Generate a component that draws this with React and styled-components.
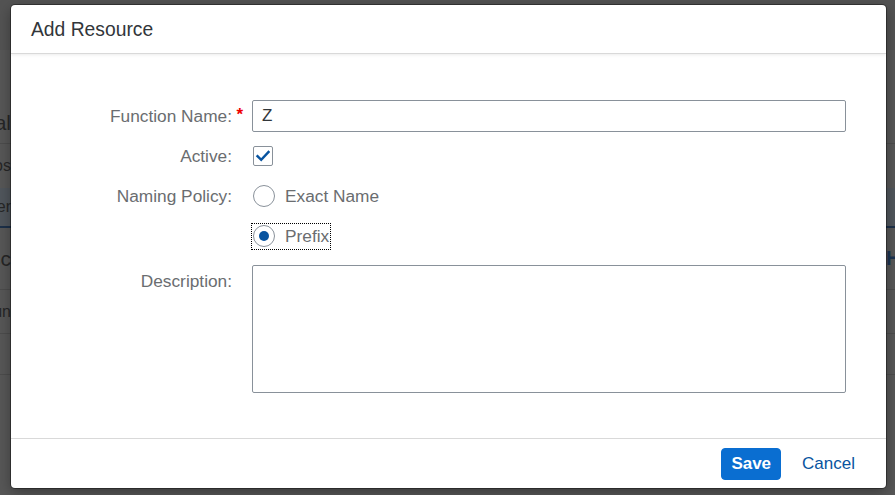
import styled, { createGlobalStyle } from 'styled-components';

const GlobalStyle = createGlobalStyle`
  html, body {
    margin: 0;
    padding: 0;
    width: 895px;
    height: 495px;
    overflow: hidden;
    font-family: "Liberation Sans", Arial, sans-serif;
  }
`;

// page behind the dialog, already dimmed
const Page = styled.div`
  position: relative;
  width: 895px;
  height: 495px;
  background: #575757;
  overflow: hidden;
`;

const Backdrop = styled.div`
  display: flex;
  flex-direction: column;
`;

const BgRow = styled.div`
  display: flex;
  justify-content: space-between;
  align-items: ${p => p.bottom ? 'flex-end' : 'center'};
  padding-bottom: ${p => p.bottom ? 8 : 0}px;
  height: ${p => p.h}px;
  background: ${p => p.bg || '#575757'};
  border-bottom: ${p => p.line ? `${p.lineW || 1}px solid ${p.line}` : 'none'};
  box-sizing: border-box;
`;

const BgLeft = styled.div`
  width: 11px;
  display: flex;
  justify-content: flex-end;
  overflow: hidden;
  white-space: nowrap;
  color: #262626;
  font-size: ${p => p.size || 16}px;
`;

const BgRight = styled.div`
  width: 9px;
  overflow: hidden;
  white-space: nowrap;
  color: #1b3452;
  font-size: 20px;
  font-weight: 700;
`;

const Dialog = styled.div`
  position: absolute;
  left: 11px;
  top: 5px;
  width: 875px;
  height: 483px;
  background: #fff;
  border-radius: 4px;
  box-shadow: 0 0 0 1px rgba(0, 0, 0, 0.35), 0 4px 14px rgba(0, 0, 0, 0.35);
  display: flex;
  flex-direction: column;
  overflow: hidden;
`;

const Header = styled.div`
  height: 49px;
  flex-shrink: 0;
  display: flex;
  align-items: center;
  padding-left: 20px;
  padding-top: 2px;
  box-sizing: border-box;
  border-bottom: 1px solid #d9d9d9;
  box-shadow: 0 1px 3px rgba(0, 0, 0, 0.08);
  position: relative;
  z-index: 1;
`;

const Title = styled.h1`
  margin: 0;
  font-size: 19.3px;
  font-weight: 400;
  color: #32363a;
`;

const Content = styled.div`
  flex: 1;
  padding-top: 46px;
`;

const Form = styled.div`
  display: grid;
  grid-template-columns: 221px 594px;
  column-gap: 20px;
  row-gap: 8px;
`;

const Label = styled.div`
  height: 32px;
  display: flex;
  align-items: center;
  justify-content: flex-end;
  font-size: 17.3px;
  color: #6a6d70;
  margin-top: ${p => p.mt || 0}px;
  position: relative;
  ${p => p.required && `
    &::after {
      content: "*";
      position: absolute;
      right: -11px;
      top: 5px;
      color: #e00;
      font-size: 17px;
      font-weight: 700;
    }
  `}
`;

const Cell = styled.div`
  height: ${p => p.h || 32}px;
  display: flex;
  align-items: ${p => p.top ? 'flex-start' : 'center'};
  margin-top: ${p => p.mt || 0}px;
`;

const Input = styled.div`
  box-sizing: border-box;
  width: 100%;
  height: 32px;
  border: 1px solid #89919a;
  border-radius: 2px;
  padding-left: 9px;
  display: flex;
  align-items: center;
  font-size: 17px;
  color: #32363a;
`;

const TextArea = styled.div`
  box-sizing: border-box;
  width: 100%;
  height: 128px;
  border: 1px solid #89919a;
  border-radius: 2px;
`;

const CheckBox = styled.div`
  box-sizing: border-box;
  width: 20px;
  height: 20px;
  margin-left: 1px;
  border: 1px solid #89919a;
  border-radius: 2px;
  display: flex;
  align-items: center;
  justify-content: center;
`;

const RadioWrap = styled.div`
  display: flex;
  align-items: center;
  gap: 10px;
  height: 25px;
  padding: 0 1px;
  outline: ${p => p.focused ? '1px dotted #000' : 'none'};
`;

const Radio = styled.div`
  box-sizing: border-box;
  width: 22px;
  height: 22px;
  border: 1px solid #89919a;
  border-radius: 50%;
  display: flex;
  align-items: center;
  justify-content: center;
  &::after {
    content: "";
    width: 10px;
    height: 10px;
    border-radius: 50%;
    background: ${p => p.checked ? '#0854a0' : 'transparent'};
  }
`;

const RadioText = styled.span`
  font-size: 17.3px;
  color: #6a6d70;
`;

const Footer = styled.div`
  height: 49px;
  flex-shrink: 0;
  border-top: 1px solid #d9d9d9;
  display: flex;
  align-items: center;
  justify-content: flex-end;
  padding-right: 22px;
  gap: 12px;
`;

const Button = styled.button`
  font-family: inherit;
  height: 32px;
  border-radius: 4px;
  font-size: 17px;
  cursor: pointer;
  padding: 0 ${p => p.primary ? 9 : 8}px;
  border: 1px solid ${p => p.primary ? '#0a6ed1' : 'transparent'};
  background: ${p => p.primary ? '#0a6ed1' : 'transparent'};
  color: ${p => p.primary ? '#fff' : '#0854a0'};
  font-weight: ${p => p.primary ? 700 : 400};
`;

const App = () => {
  return (
    <Page>
      <GlobalStyle />
      <Backdrop>
        <BgRow h={50} bg="#535353" />
        <BgRow h={94} line="#4c4c4c" bottom>
          <BgLeft size={21}>Local</BgLeft>
          <BgRight />
        </BgRow>
        <BgRow h={44}>
          <BgLeft>Purpos</BgLeft>
          <BgRight />
        </BgRow>
        <BgRow h={40} bg="#50565c" line="#1c3049" lineW={2}>
          <BgLeft>Over</BgLeft>
          <BgRight />
        </BgRow>
        <BgRow h={62} line="#4c4c4c">
          <BgLeft size={21}>Resc</BgLeft>
          <BgRight>H</BgRight>
        </BgRow>
        <BgRow h={44} line="#4c4c4c">
          <BgLeft>Fun</BgLeft>
          <BgRight />
        </BgRow>
        <BgRow h={41} line="#4c4c4c" />
      </Backdrop>

      <Dialog>
        <Header>
          <Title>Add Resource</Title>
        </Header>
        <Content>
          <Form>
            <Label required>Function Name:</Label>
            <Cell>
              <Input>Z</Input>
            </Cell>

            <Label>Active:</Label>
            <Cell>
              <CheckBox>
                <svg width="16" height="14" viewBox="0 0 16 14">
                  <path d="M2.5 7.2 L6.2 10.8 L13.5 3" fill="none" stroke="#0854a0" strokeWidth="2.4" strokeLinecap="square" />
                </svg>
              </CheckBox>
            </Cell>

            <Label>Naming Policy:</Label>
            <Cell>
              <RadioWrap>
                <Radio />
                <RadioText>Exact Name</RadioText>
              </RadioWrap>
            </Cell>

            <div />
            <Cell>
              <RadioWrap focused>
                <Radio checked />
                <RadioText>Prefix</RadioText>
              </RadioWrap>
            </Cell>

            <Label mt={5}>Description:</Label>
            <Cell h={128} mt={5} top>
              <TextArea />
            </Cell>
          </Form>
        </Content>
        <Footer>
          <Button primary>Save</Button>
          <Button>Cancel</Button>
        </Footer>
      </Dialog>
    </Page>
  );
};

export default App;
